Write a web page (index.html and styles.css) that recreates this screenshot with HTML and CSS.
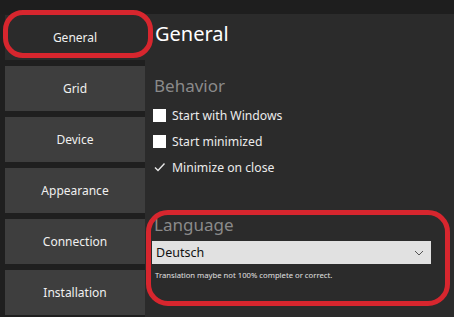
FILE: index.html
```html
<!DOCTYPE html>
<html lang="en">
<head>
    <meta charset="UTF-8">
    <title>Settings</title>
    <link rel="stylesheet" href="styles.css">
</head>
<body>
    <div class="window">
        <div class="titlebar"></div>
        <div class="layout">
            <div class="sidebar">
                <div class="nav-btn active">General</div>
                <div class="nav-btn">Grid</div>
                <div class="nav-btn">Device</div>
                <div class="nav-btn">Appearance</div>
                <div class="nav-btn">Connection</div>
                <div class="nav-btn">Installation</div>
            </div>
            <div class="content">
                <h1>General</h1>
                <h2 class="section">Behavior</h2>
                <div class="check-row"><span class="box"></span>Start with Windows</div>
                <div class="check-row"><span class="box"></span>Start minimized</div>
                <div class="check-row"><span class="box checked">
                    <svg width="13" height="13" viewBox="0 0 13 13"><path d="M2 6.5 L5 9.5 L11.5 2.5" fill="none" stroke="#e8e8e8" stroke-width="1.4"/></svg>
                </span>Minimize on close</div>
                <h2 class="section lang">Language</h2>
                <div class="select">
                    <span>Deutsch</span>
                    <svg width="10" height="6" viewBox="0 0 10 6"><path d="M1 1 L5 5 L9 1" fill="none" stroke="#555" stroke-width="1"/></svg>
                </div>
                <div class="note">Translation maybe not 100% complete or correct.</div>
            </div>
        </div>
        <div class="mark mark-nav"></div>
        <div class="mark mark-lang"></div>
    </div>
</body>
</html>
```

FILE: styles.css
```css
body {
    margin: 0;
    background-color: #1f1f1f;
    font-family: 'Noto Sans', 'Open Sans', sans-serif;
    color: #eeeeee;
}
.window {
    position: relative;
    width: 454px;
    height: 317px;
    overflow: hidden;
}
.titlebar {
    height: 14px;
    background-color: #1e1e1e;
}
.layout {
    display: flex;
    height: 303px;
}
.sidebar {
    width: 140px;
    padding: 1px 0 0 5px;
    display: flex;
    flex-direction: column;
    gap: 6px;
}
.nav-btn {
    height: 45px;
    background-color: #3e3e3e;
    display: flex;
    align-items: center;
    justify-content: center;
    font-size: 12px;
    color: #f0f0f0;
}
.nav-btn.active {
    background-color: #2b2b2b;
}
.content {
    flex: 1;
    background-color: #2b2b2b;
    padding: 0 0 0 8px;
}
h1 {
    margin: 7px 0 0 2px;
    font-size: 20px;
    font-weight: normal;
    line-height: 26px;
    color: #ffffff;
}
.section {
    margin: 28px 0 5px 1px;
    font-size: 17px;
    font-weight: normal;
    line-height: 22px;
    color: #8a8a8a;
}
.section.lang {
    margin-top: 34px;
    margin-bottom: 5px;
}
.check-row {
    display: flex;
    align-items: center;
    height: 26px;
    font-size: 12.2px;
    color: #ececec;
}
.box {
    width: 13px;
    height: 13px;
    background-color: #ffffff;
    margin-right: 6px;
    display: flex;
}
.box.checked {
    background-color: transparent;
}
.select {
    width: 268px;
    height: 23px;
    margin-left: -1px;
    background-color: #e1e1e1;
    display: flex;
    align-items: center;
    justify-content: space-between;
    padding: 0 7px 0 4px;
    font-size: 12.5px;
    color: #111111;
}
.note {
    margin: 6px 0 0 2px;
    font-size: 7.7px;
    color: #e0e0e0;
}
.mark {
    position: absolute;
    border: 5px solid #d7262e;
}
.mark-nav {
    left: 3px;
    top: 10px;
    width: 140px;
    height: 38px;
    border-radius: 20px;
}
.mark-lang {
    left: 146px;
    top: 210px;
    width: 294px;
    height: 86px;
    border-radius: 22px;
}
```
